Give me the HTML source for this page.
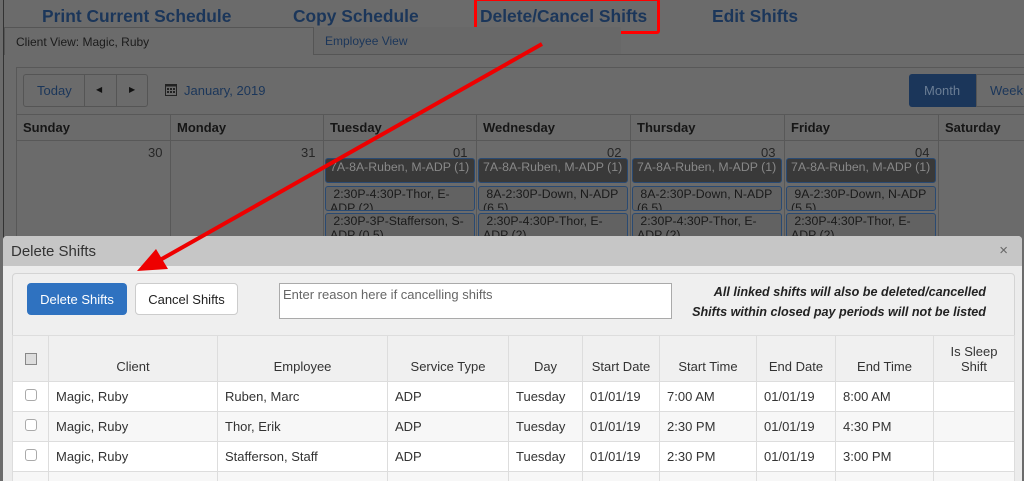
<!DOCTYPE html>
<html><head><style>
*{box-sizing:border-box;margin:0;padding:0}
html,body{width:1024px;height:481px;overflow:hidden}
body{background:#6b6b6b;font-family:"Liberation Sans",sans-serif;position:relative;color:#222}
.a{position:absolute}
.nav{font-weight:bold;font-size:17.4px;color:#1b365a;top:6px}
.day{font-weight:bold;font-size:13px;color:#161616;top:120px}
.num{font-size:13px;color:#262626;top:145px}
.ev{position:absolute;height:25px;border:1px solid #2a4a72;border-radius:3px;background:#626262;color:#1a1a1a;font-size:12.3px;padding-left:4px;line-height:14px;overflow:hidden;white-space:nowrap}
.ev.d{background:#393939;color:#888}
table{border-collapse:collapse;font-size:13px;color:#333}
td,th{border:1px solid #ddd;font-weight:normal}
th{background:#f0f0f0;height:46px;vertical-align:bottom;padding-bottom:7px}
td{height:30px;padding-left:7px;background:#fff}
.cb{display:inline-block;width:12px;height:12px;border:1px solid #aaa;border-radius:3px;background:#fff}
</style></head><body>
<div class="a" style="left:3px;top:0;width:1px;height:481px;background:#333"></div>
<div class="a nav" style="left:42px">Print Current Schedule</div>
<div class="a nav" style="left:293px">Copy Schedule</div>
<div class="a nav" style="left:480px">Delete/Cancel Shifts</div>
<div class="a nav" style="left:712px">Edit Shifts</div>
<div class="a" style="left:474px;top:-2px;width:186px;height:36px;border:3px solid #f00;border-radius:3px"></div>
<div class="a" style="left:4px;top:27px;width:310px;height:28px;border:1px solid #555;border-bottom:none;background:#6b6b6b;font-size:12px;padding:7px 11px;color:#1b1b1b">Client View: Magic, Ruby</div>
<div class="a" style="left:314px;top:27px;width:307px;height:27px;background:#686868;font-size:12px;padding:7px 11px;color:#1b365a">Employee View</div>
<div class="a" style="left:314px;top:54px;width:710px;height:1px;background:#555"></div>
<div class="a" style="left:16px;top:67px;width:1008px;height:1px;background:#585858"></div>
<div class="a" style="left:16px;top:67px;width:1px;height:200px;background:#585858"></div>
<div class="a" style="left:23px;top:74px;width:125px;height:33px;border:1px solid #555;border-radius:3px"></div>
<div class="a" style="left:84px;top:74px;width:1px;height:33px;background:#555"></div>
<div class="a" style="left:116px;top:74px;width:1px;height:33px;background:#555"></div>
<div class="a" style="left:37px;top:83px;font-size:13px;color:#1b365a">Today</div>
<div class="a" style="left:96px;top:85px;font-size:8px;color:#111">◀</div>
<div class="a" style="left:129px;top:85px;font-size:8px;color:#111">▶</div>
<svg class="a" style="left:165px;top:83px" width="12" height="13"><rect x="0.5" y="1.5" width="11" height="11" fill="none" stroke="#222"/><rect x="0.5" y="1.5" width="11" height="2" fill="#222"/><g fill="#222"><rect x="2" y="5" width="2" height="2"/><rect x="5" y="5" width="2" height="2"/><rect x="8" y="5" width="2" height="2"/><rect x="2" y="8" width="2" height="2"/><rect x="5" y="8" width="2" height="2"/><rect x="8" y="8" width="2" height="2"/></g></svg>
<div class="a" style="left:184px;top:83px;font-size:13px;color:#1b365a">January, 2019</div>
<div class="a" style="left:909px;top:74px;width:67px;height:33px;background:#1b365a;border-radius:3px 0 0 3px;color:#6a7d94;font-size:13px;padding:9px 15px">Month</div>
<div class="a" style="left:976px;top:74px;width:60px;height:33px;border:1px solid #555;color:#1b365a;font-size:13px;padding:8px 13px">Week</div>
<div class="a" style="left:16px;top:114px;width:1008px;height:1px;background:#585858"></div>
<div class="a" style="left:16px;top:140px;width:1008px;height:1px;background:#585858"></div>
<div class="a" style="left:170px;top:114px;width:1px;height:130px;background:#585858"></div>
<div class="a" style="left:323px;top:114px;width:1px;height:130px;background:#585858"></div>
<div class="a" style="left:476px;top:114px;width:1px;height:130px;background:#585858"></div>
<div class="a" style="left:630px;top:114px;width:1px;height:130px;background:#585858"></div>
<div class="a" style="left:784px;top:114px;width:1px;height:130px;background:#585858"></div>
<div class="a" style="left:938px;top:114px;width:1px;height:130px;background:#585858"></div>
<div class="a day" style="left:23px">Sunday</div>
<div class="a day" style="left:177px">Monday</div>
<div class="a day" style="left:330px">Tuesday</div>
<div class="a day" style="left:483px">Wednesday</div>
<div class="a day" style="left:637px">Thursday</div>
<div class="a day" style="left:791px">Friday</div>
<div class="a day" style="left:945px">Saturday</div>
<div class="a num" style="left:148px">30</div>
<div class="a num" style="left:301px">31</div>
<div class="a num" style="left:453px">01</div>
<div class="a num" style="left:607px">02</div>
<div class="a num" style="left:761px">03</div>
<div class="a num" style="left:915px">04</div>
<div class="ev d" style="left:325px;top:158px;width:150px;padding-top:1px">7A-8A-Ruben, M-ADP (1)</div>
<div class="ev d" style="left:478px;top:158px;width:150px;padding-top:1px">7A-8A-Ruben, M-ADP (1)</div>
<div class="ev d" style="left:632px;top:158px;width:150px;padding-top:1px">7A-8A-Ruben, M-ADP (1)</div>
<div class="ev d" style="left:786px;top:158px;width:150px;padding-top:1px">7A-8A-Ruben, M-ADP (1)</div>
<div class="ev" style="left:325px;top:186px;width:150px">&nbsp;2:30P-4:30P-Thor, E-<br>ADP (2)</div>
<div class="ev" style="left:478px;top:186px;width:150px">&nbsp;8A-2:30P-Down, N-ADP<br>(6.5)</div>
<div class="ev" style="left:632px;top:186px;width:150px">&nbsp;8A-2:30P-Down, N-ADP<br>(6.5)</div>
<div class="ev" style="left:786px;top:186px;width:150px">&nbsp;9A-2:30P-Down, N-ADP<br>(5.5)</div>
<div class="ev" style="left:325px;top:213px;width:150px">&nbsp;2:30P-3P-Stafferson, S-<br>ADP (0.5)</div>
<div class="ev" style="left:478px;top:213px;width:150px">&nbsp;2:30P-4:30P-Thor, E-<br>ADP (2)</div>
<div class="ev" style="left:632px;top:213px;width:150px">&nbsp;2:30P-4:30P-Thor, E-<br>ADP (2)</div>
<div class="ev" style="left:786px;top:213px;width:150px">&nbsp;2:30P-4:30P-Thor, E-<br>ADP (2)</div>
<div class="a" style="left:3px;top:236px;width:1019px;height:250px;background:#ececec;border-radius:4px 4px 0 0">
 <div style="height:30px;background:#c6c6c6;border-radius:4px 4px 0 0;font-size:15px;padding:7px 8px;color:#333;position:relative">Delete Shifts<span style="position:absolute;right:14px;top:6px;font-size:15px;color:#666">×</span></div>
</div>
<div class="a" style="left:12px;top:273px;width:1003px;height:220px;border:1px solid #d4d4d4;border-radius:4px;background:#efefef"></div>
<div class="a" style="left:27px;top:283px;width:100px;height:32px;background:#2f72c0;border-radius:4px;color:#fff;font-size:13px;padding:9px 0;text-align:center;white-space:nowrap">Delete Shifts</div>
<div class="a" style="left:135px;top:283px;width:103px;height:32px;background:#fff;border:1px solid #ccc;border-radius:4px;color:#222;font-size:13px;padding:8px 0;text-align:center;white-space:nowrap">Cancel Shifts</div>
<div class="a" style="left:279px;top:283px;width:393px;height:36px;background:#fff;border:1px solid #aaa;color:#666;font-size:13px;padding:3px 3px">Enter reason here if cancelling shifts</div>
<div class="a" style="right:38px;top:282px;font-size:12.6px;font-weight:bold;font-style:italic;color:#222;text-align:right;line-height:20px;white-space:nowrap">All linked shifts will also be deleted/cancelled<br>Shifts within closed pay periods will not be listed</div>
<table class="a" style="left:12px;top:335px;width:1003px">
<tr><th style="width:36px;padding-bottom:13px"><span class="cb" style="border-radius:0;background:#ddd;border-color:#888"></span></th><th style="width:169px">Client</th><th style="width:170px">Employee</th><th style="width:121px">Service Type</th><th style="width:74px">Day</th><th style="width:77px">Start Date</th><th style="width:97px">Start Time</th><th style="width:79px">End Date</th><th style="width:98px">End Time</th><th>Is Sleep<br>Shift</th></tr>
<tr><td style="padding-left:12px"><span class="cb"></span></td><td>Magic, Ruby</td><td>Ruben, Marc</td><td>ADP</td><td>Tuesday</td><td>01/01/19</td><td>7:00 AM</td><td>01/01/19</td><td>8:00 AM</td><td></td></tr>
<tr style="background:#f7f7f7"><td style="padding-left:12px;background:#f7f7f7"><span class="cb"></span></td><td style="background:#f7f7f7">Magic, Ruby</td><td style="background:#f7f7f7">Thor, Erik</td><td style="background:#f7f7f7">ADP</td><td style="background:#f7f7f7">Tuesday</td><td style="background:#f7f7f7">01/01/19</td><td style="background:#f7f7f7">2:30 PM</td><td style="background:#f7f7f7">01/01/19</td><td style="background:#f7f7f7">4:30 PM</td><td style="background:#f7f7f7"></td></tr>
<tr><td style="padding-left:12px"><span class="cb"></span></td><td>Magic, Ruby</td><td>Stafferson, Staff</td><td>ADP</td><td>Tuesday</td><td>01/01/19</td><td>2:30 PM</td><td>01/01/19</td><td>3:00 PM</td><td></td></tr>
<tr><td style="background:#f7f7f7"></td><td style="background:#f7f7f7"></td><td style="background:#f7f7f7"></td><td style="background:#f7f7f7"></td><td style="background:#f7f7f7"></td><td style="background:#f7f7f7"></td><td style="background:#f7f7f7"></td><td style="background:#f7f7f7"></td><td style="background:#f7f7f7"></td><td style="background:#f7f7f7"></td></tr>
</table>
<svg class="a" style="left:0;top:0" width="1024" height="481">
<line x1="542" y1="44" x2="160" y2="260" stroke="#e00" stroke-width="4"/>
<polygon points="137,271 156,249 168,269" fill="#e00"/>
</svg>
</body></html>
